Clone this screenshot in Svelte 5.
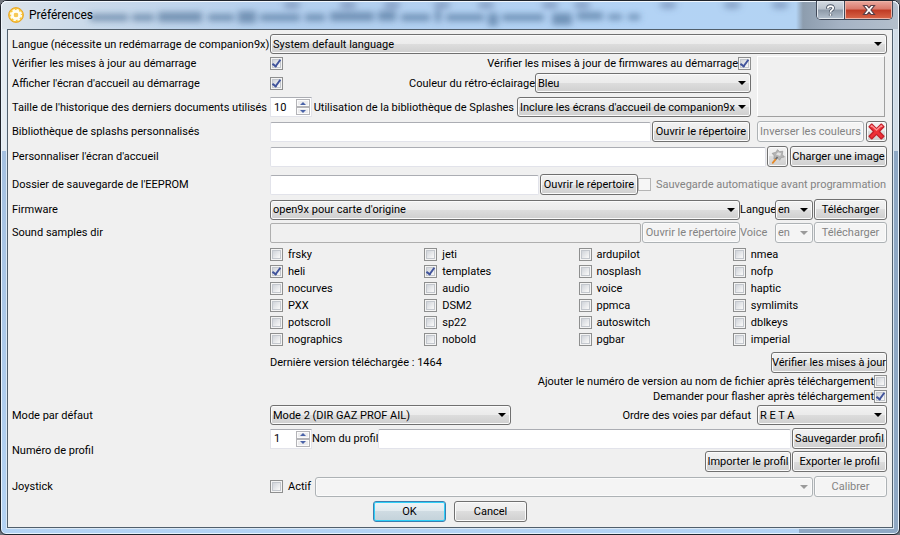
<script>
  const options = [
    'frsky', 'jeti', 'ardupilot', 'nmea',
    'heli', 'templates', 'nosplash', 'nofp',
    'nocurves', 'audio', 'voice', 'haptic',
    'PXX', 'DSM2', 'ppmca', 'symlimits',
    'potscroll', 'sp22', 'autoswitch', 'dblkeys',
    'nographics', 'nobold', 'pgbar', 'imperial'
  ];
  const enabled = ['heli', 'templates'];

  let history = $state(10);
  let profile = $state(1);

  // Blurred shapes seen through the glass title bar: x, y, width, height
  const haze = [
    [88, 12, 38, 7], [130, 12, 22, 7], [156, 10, 44, 10], [206, 12, 26, 7],
    [236, 9, 18, 12], [258, 12, 40, 7], [303, 12, 20, 7], [328, 10, 44, 9],
    [376, 9, 18, 10], [399, 12, 29, 7], [433, 8, 6, 12], [444, 12, 38, 7],
    [486, 11, 10, 13], [500, 12, 42, 7], [550, 11, 20, 12], [575, 10, 26, 8],
    [606, 12, 14, 6], [626, 12, 12, 6]
  ];
  const specks = [290, 346, 390, 440, 484, 548, 580, 666, 730, 778];
</script>

{#snippet combo(id, value, cls, disabled = false)}
  <span class="combo {cls}" class:disabled>
    <select {id} {disabled} aria-label={value ? undefined : 'Joystick'}><option>{value}</option></select>
  </span>
{/snippet}

{#snippet arrows(step)}
  <span class="arrows">
    <button type="button" aria-label="Augmenter" onclick={() => step(1)}><i class="up"></i></button>
    <button type="button" aria-label="Diminuer" onclick={() => step(-1)}><i class="down"></i></button>
  </span>
{/snippet}

<div class="window">
  <header>
    <svg class="glass" aria-hidden="true">
      <defs>
        <filter id="soft" x="-20%" y="-100%" width="140%" height="300%"><feGaussianBlur stdDeviation="3 3" /></filter>
      </defs>
      <g filter="url(#soft)">
        {#each haze as [x, y, w, h]}
          <rect {x} {y} width={w} height={h} fill="#3d5f86" opacity="0.55" />
        {/each}
        {#each specks as x}
          <ellipse cx={x} cy="3" rx="9" ry="4" fill="#5a6f9c" opacity="0.5" />
        {/each}
      </g>
    </svg>
    <svg class="logo" viewBox="0 0 16 16" aria-hidden="true">
      <circle cx="8" cy="8" r="7.4" fill="#f9c83c" stroke="#e8a52a" stroke-width="1" />
      <circle cx="8" cy="8" r="3.6" fill="none" stroke="#fffdf2" stroke-width="2.6" />
      <circle cx="8" cy="8" r="5.3" fill="none" stroke="#fffdf2" stroke-width="1.6" stroke-dasharray="2.4 1.76" />
      <circle cx="8" cy="8" r="2" fill="#f6c95a" />
    </svg>
    <h1>Préférences</h1>
    <div class="caption">
      <button type="button" class="help" aria-label="Aide">
        <svg viewBox="0 0 12 14"><path d="M3 5V3.8Q3.4 2 6 2t3 2.3Q9 5.6 7.4 6.6T6 9M6 10.6v2" fill="none" stroke="#4b5566" stroke-width="3.6" /><path d="M3 4.8Q3 2.2 6 2.2t3 2.2Q9 5.6 7.4 6.6T6 9M6 10.6v2" fill="none" stroke="#fff" stroke-width="1.8" /></svg>
      </button>
      <button type="button" class="close" aria-label="Fermer">
        <svg viewBox="0 0 14 12"><path d="M1.5 1.5h3.6L7 3.8l1.9-2.3h3.6L9 6l3.5 4.5H8.9L7 8.2l-1.9 2.3H1.5L5 6z" fill="#fff" stroke="#5b4048" stroke-width="1.2" /></svg>
      </button>
    </div>
  </header>

  <form class="client">
    <div class="row">
      <label for="lang">Langue (nécessite un redémarrage de companion9x)</label>
      <div class="line">{@render combo('lang', 'System default language', 'grow')}</div>
    </div>

    <div class="splash">
      <div class="grow">
        <div class="row short">
          <label for="upd">Vérifier les mises à jour au démarrage</label>
          <div class="line">
            <input type="checkbox" id="upd" checked />
            <label class="end" for="fwupd">Vérifier les mises à jour de firmwares au démarrage</label>
            <input type="checkbox" id="fwupd" checked />
          </div>
        </div>
        <div class="row">
          <label for="home">Afficher l'écran d'accueil au démarrage</label>
          <div class="line">
            <input type="checkbox" id="home" checked />
            <label class="end" for="light">Couleur du rétro-éclairage</label>
            {@render combo('light', 'Bleu', 'w-light')}
          </div>
        </div>
        <div class="row gap">
          <label for="hist">Taille de l'historique des derniers documents utilisés</label>
          <div class="line">
            <span class="spin">
              <input type="number" id="hist" bind:value={history} />
              {@render arrows((d) => (history += d))}
            </span>
            <label class="end near" for="lib">Utilisation de la bibliothèque de Splashes</label>
            {@render combo('lib', "Inclure les écrans d'accueil de companion9x", 'w-lib')}
          </div>
        </div>
      </div>
      <div class="preview"></div>
    </div>

    <div class="row gap">
      <label for="splashs">Bibliothèque de splashs personnalisés</label>
      <div class="line">
        <input type="text" id="splashs" class="grow" />
        <button type="button" class="w-open">Ouvrir le répertoire</button>
        <button type="button" class="w-invert" disabled>Inverser les couleurs</button>
        <button type="button" class="icon" aria-label="Effacer">
          <svg viewBox="0 0 16 16"><path d="M1 3.5 3.5 1 8 5.3 12.5 1 15 3.5 10.7 8 15 12.5 12.5 15 8 10.7 3.5 15 1 12.5 5.3 8z" fill="#ee2f36" stroke="#c3202a" stroke-width="1.2" stroke-linejoin="round" /><path d="M2.5 3.5l1-1L8 6.6l4.5-4.1 1 1" fill="none" stroke="#ff8f90" stroke-width="1.4" /></svg>
        </button>
      </div>
    </div>

    <div class="row gap">
      <label for="perso">Personnaliser l'écran d'accueil</label>
      <div class="line">
        <input type="text" id="perso" class="grow" />
        <button type="button" class="icon" aria-label="Choisir une image">
          <svg viewBox="0 0 16 16"><path d="M3 5l3.500-1L8 1.500l2 2 3-.5-.5 3 2 2.500-3 .5-1.500 2.500-2-2L4.500 10 5 7.500z" fill="#b4b4b4" stroke="#959595" stroke-width=".6" /><path d="M6.500 6l2-2 3 1-1 2.500z" fill="#e2e2e2" /><path d="M8 8.500 6 11" stroke="#6b6b6b" stroke-width="1.500" /><path d="M6 11l-2.500 3" stroke="#e58a2a" stroke-width="1.700" stroke-linecap="round" /></svg>
        </button>
        <button type="button" class="w-image">Charger une image</button>
      </div>
    </div>

    <div class="row wide-gap">
      <label for="eeprom">Dossier de sauvegarde de l'EEPROM</label>
      <div class="line">
        <input type="text" id="eeprom" class="grow" />
        <button type="button" class="w-open">Ouvrir le répertoire</button>
        <label class="check dim w-auto"><input type="checkbox" disabled />Sauvegarde automatique avant programmation</label>
      </div>
    </div>

    <div class="row gap">
      <label for="fw">Firmware</label>
      <div class="line">
        {@render combo('fw', "open9x pour carte d'origine", 'grow')}
        <label class="w-lang" for="fwlang">Langue</label>
        {@render combo('fwlang', 'en', 'w-code')}
        <button type="button" class="w-std">Télécharger</button>
      </div>
    </div>

    <div class="row tight">
      <label for="sound">Sound samples dir</label>
      <div class="line">
        <input type="text" id="sound" class="grow" disabled />
        <button type="button" class="w-open" disabled>Ouvrir le répertoire</button>
        <label class="w-lang dim" for="voice">Voice</label>
        {@render combo('voice', 'en', 'w-code', true)}
        <button type="button" class="w-std" disabled>Télécharger</button>
      </div>
    </div>

    <div class="row snug">
      <span></span>
      <div class="options">
        {#each options as name}
          <label class="check"><input type="checkbox" checked={enabled.includes(name)} />{name}</label>
        {/each}
      </div>
    </div>

    <div class="row gap">
      <span></span>
      <div class="line">
        <span>Dernière version téléchargée : 1464</span>
        <button type="button" class="w-verify end">Vérifier les mises à jour</button>
      </div>
    </div>

    <div class="flags">
      <label>Ajouter le numéro de version au nom de fichier après téléchargement<input type="checkbox" /></label>
      <label>Demander pour flasher après téléchargement<input type="checkbox" checked /></label>
    </div>

    <div class="row">
      <label for="mode">Mode par défaut</label>
      <div class="line">
        {@render combo('mode', 'Mode 2 (DIR GAZ PROF AIL)', 'w-mode')}
        <label class="end apart" for="order">Ordre des voies par défaut</label>
        {@render combo('order', 'R E T A', 'w-order')}
      </div>
    </div>

    <div class="row snug">
      <label for="prof">Numéro de profil</label>
      <div>
        <div class="line">
          <span class="spin">
            <input type="number" id="prof" bind:value={profile} />
            {@render arrows((d) => (profile += d))}
          </span>
          <label for="pname">Nom du profil</label>
          <input type="text" id="pname" class="grow" />
          <button type="button" class="w-prof">Sauvegarder profil</button>
        </div>
        <div class="line tight">
          <button type="button" class="w-import end">Importer le profil</button>
          <button type="button" class="w-prof">Exporter le profil</button>
        </div>
      </div>
    </div>

    <div class="row gap">
      <span>Joystick</span>
      <div class="line">
        <label class="check w-active"><input type="checkbox" />Actif</label>
        {@render combo('stick', '', 'grow', true)}
        <button type="button" class="w-std" disabled>Calibrer</button>
      </div>
    </div>

    <div class="actions">
      <button type="submit" class="w-std default">OK</button>
      <button type="button" class="w-std">Cancel</button>
    </div>
  </form>
</div>

<style>
  :global(body) { background: #6f747c; }
  * { box-sizing: border-box; }

  .window {
    display: flex;
    flex-direction: column;
    min-height: 100vh;
    padding: 0 6px 6px;
    border: 1px solid #1f242c;
    border-radius: 7px 7px 6px 6px;
    box-shadow: inset 0 0 0 1px #e9f3fc;
    background:
      linear-gradient(to right, transparent calc(100% - 8px), #d2dce6 0) 0 0 / 100% 150px no-repeat,
      linear-gradient(to right, #e4ebf1 8px, transparent 0) 0 0 / 100% 150px no-repeat,
      linear-gradient(to right, transparent calc(100% - 100px), #8fa8c4 0) 0 150px / 100% 100% no-repeat,
      linear-gradient(#9fb9d8, #b4d3f4);
    color: #000;
    font: 11px/15px Roboto, "Liberation Sans", sans-serif;
  }

  header {
    position: relative;
    display: flex;
    align-items: center;
    height: 28px;
    margin: 0 -6px;
    padding: 0 6px 0 7px;
    border-radius: 6px 6px 0 0;
    background: linear-gradient(to right, #dbe3ea, #cbdaea 80px, #b3cfee 280px, #b3d3f5 640px, #b3d3f3 795px, #8d9dae 802px, #a5b3c4 840px, #b4c0cd);
    box-shadow: inset 0 1px #f1f7fd, inset 1px 0 #f1f7fd, inset -1px 0 #f1f7fd;
  }
  .glass { position: absolute; inset: 1px; width: calc(100% - 2px); height: 27px; }
  .logo { position: relative; width: 16px; height: 16px; }
  h1 { position: relative; margin: 0 0 0 5px; font-size: 12px; font-weight: 400; line-height: 16px; }

  .caption {
    position: relative;
    display: flex;
    align-self: flex-start;
    margin-left: auto;
    height: 19px;
    border: 1px solid #3f4858;
    border-top: 0;
    border-radius: 0 0 5px 5px;
    overflow: hidden;
  }
  .caption button {
    display: flex;
    align-items: center;
    justify-content: center;
    width: 27px;
    height: 100%;
    margin: 0;
    padding: 0;
    border: 0;
    border-radius: 0;
    background: linear-gradient(#d3dae2, #b9c2cd 45%, #8d99a8 50%, #b5c1ce);
    box-shadow: inset 0 0 0 1px #e3e8ee;
  }
  .caption .close {
    width: 48px;
    border-left: 1px solid #3f4858;
    background: linear-gradient(#eaa99f, #d9796b 45%, #bf3a24 50%, #d9674a);
    box-shadow: inset 0 0 0 1px #eeb5a8;
  }
  .help svg { width: 11px; height: 13px; }
  .close svg { width: 14px; height: 12px; }

  .client {
    flex: 1;
    padding: 4px 5px 4px 4px;
    border: 1px solid #515f6c;
    background: #f0f0f0;
    box-shadow: 0 0 0 1px #dbe8f4;
  }

  .row { display: grid; grid-template-columns: 258px 1fr; align-items: center; min-height: 20px; }
  .row.short { min-height: 19px; }
  .tight { margin-top: 2px; }
  .snug { margin-top: 3px; }
  .gap { margin-top: 4px; }
  .wide-gap { margin-top: 7px; }
  .line { display: flex; align-items: center; }
  .grow { flex: 1; min-width: 0; }
  .end { margin-left: auto; }
  .apart { padding-right: 6px; }
  .near { padding-right: 3px; }
  label, button, span { white-space: nowrap; }
  .dim { color: #838383; }

  .splash { display: flex; gap: 6px; }
  .preview {
    width: 128px;
    margin: 2px 2px 0 0;
    border: 1px solid;
    border-color: #fff #a0a0a0 #a0a0a0 #fff;
  }

  button, select, input { margin: 0; font: inherit; color: inherit; }

  button {
    height: 21px;
    margin-left: 1px;
    padding: 0;
    border: 1px solid #707070;
    border-radius: 3px;
    background: linear-gradient(#f2f2f2, #ebebeb 50%, #dddddd 50%, #cfcfcf);
    box-shadow: inset 0 0 0 1px #fbfbfb;
  }
  button:disabled { border-color: #adb2b5; background: #f4f4f4; color: #838383; }
  button.default {
    border-color: #3c7fb1;
    background: linear-gradient(#eef4f7, #e0e9ee 50%, #cfdbe2 50%, #c3d2da);
    box-shadow: inset 0 0 0 1px #2fd0f8;
  }
  .icon { display: flex; align-items: center; justify-content: center; width: 21px; }
  .icon svg { width: 17px; height: 17px; }
  .icon + button { margin-left: 2px; }

  input[type='text'] {
    height: 20px;
    padding: 0 3px;
    border: 1px solid #e2e3ea;
    border-top-color: #abadb3;
    border-radius: 2px;
    background: #fff;
  }
  input[type='text']:disabled { border-color: #afafaf; background: #f0f0f0; }

  input[type='checkbox'] {
    appearance: none;
    flex: none;
    position: relative;
    width: 13px;
    height: 13px;
    border: 1px solid #8e8f8f;
    background: linear-gradient(135deg, #c4c9d1, #f6f6f6 75%);
    box-shadow: inset 0 0 0 1px #f4f4f4, inset 0 0 0 2px #c3c7cd;
  }
  input[type='checkbox']:disabled { border-color: #b5b5b5; background: #f6f6f6; box-shadow: none; }
  input[type='checkbox']:checked::after {
    content: '';
    position: absolute;
    left: 3px;
    top: 0;
    width: 3px;
    height: 7px;
    border: solid #41549c;
    border-width: 0 2px 2px 0;
    transform: rotate(36deg);
  }

  .combo { position: relative; display: flex; height: 20px; }
  .combo select {
    appearance: none;
    width: 100%;
    height: 20px;
    padding: 0 2px;
    border: 1px solid #707070;
    border-radius: 3px;
    background: linear-gradient(#f2f2f2, #ebebeb 50%, #dddddd 50%, #cfcfcf);
    box-shadow: inset 0 0 0 1px #fbfbfb;
  }
  .combo::after {
    content: '';
    position: absolute;
    right: 5px;
    top: 8px;
    border: 4px solid transparent;
    border-top-color: #000;
    border-bottom: 0;
    pointer-events: none;
  }
  .combo.disabled select { border-color: #adb2b5; background: #f4f4f4; color: #838383; opacity: 1; }
  .combo.disabled::after { border-top-color: #9a9a9a; }

  .spin {
    display: flex;
    width: 42px;
    height: 20px;
    border: 1px solid #e2e3ea;
    border-top-color: #abadb3;
    background: #fff;
  }
  .spin input {
    appearance: textfield;
    flex: 1;
    min-width: 0;
    padding: 0 0 0 3px;
    border: 0;
    background: none;
  }
  .spin input::-webkit-inner-spin-button { appearance: none; margin: 0; }
  .arrows { display: flex; flex-direction: column; width: 15px; padding: 1px 1px 1px 0; }
  .arrows button {
    display: flex;
    align-items: center;
    justify-content: center;
    flex: 1;
    height: 8px;
    margin: 0;
    border-color: #b4b4b8;
    border-radius: 0;
    background: #ececee;
  }
  .up, .down { border: 3px solid transparent; }
  .up { border-top: 0; border-bottom-color: #4a63a8; }
  .down { border-bottom: 0; border-top-color: #4a63a8; }

  .check { display: flex; align-items: center; gap: 5px; }
  .options { display: grid; grid-template-columns: repeat(4, 1fr); grid-auto-rows: 17px; }
  .flags { display: flex; flex-direction: column; align-items: flex-end; margin: 1px 0; }
  .flags label { display: flex; align-items: center; height: 15px; }
  .actions { display: flex; justify-content: center; gap: 7px; margin-top: 4px; }

  .w-light { width: 216px; }
  .w-lib { width: 234px; }
  .w-open { width: 98px; }
  .w-invert { width: 107px; margin-left: 7px; }
  .w-invert + .icon { margin-left: 2px; }
  .w-image { width: 97px; }
  .w-auto { width: 249px; }
  .w-lang { width: 35px; }
  .w-code { width: 38px; }
  .w-std { width: 73px; }
  .w-verify { width: 116px; }
  .end.w-verify, .end.w-import { margin-left: auto; }
  .w-mode { width: 241px; }
  .w-order { width: 130px; }
  .w-prof { width: 95px; }
  .w-import { width: 86px; }
  .w-active { width: 45px; }
</style>
